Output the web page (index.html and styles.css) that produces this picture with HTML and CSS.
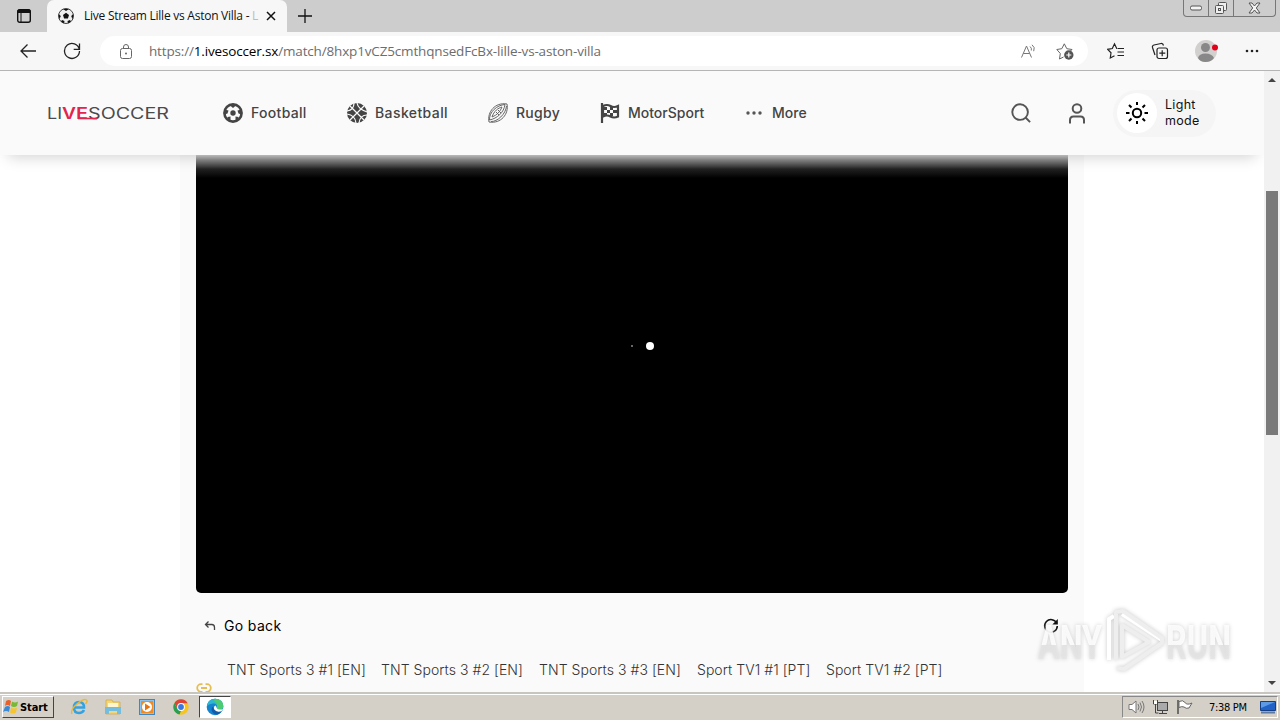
FILE: index.html
```html
<!DOCTYPE html>
<html lang="en">
<head>
    <meta charset="utf-8">
    <title>Live Stream Lille vs Aston Villa</title>
    <link rel="stylesheet" href="styles.css">
</head>
<body>
    <!-- tab strip -->
    <div class="tabs">
        <svg class="tab-menu" width="16" height="16" viewBox="0 0 16 16"><rect x="1.700" y="1.700" width="12.600" height="12.600" rx="2" fill="none" stroke="#111" stroke-width="1.400"/><path d="M2 2h12v2.500H2z" fill="#111" stroke="#111"/><path d="M5 5v9" stroke="#111"/></svg>
        <div class="tab">
            <svg width="16" height="16" viewBox="0 0 16 16"><circle cx="8" cy="8" r="7.500" fill="#eee" stroke="#444"/><path d="M8 4.800l3 2.200-1.100 3.500H6.100L5 7zM5 .9h6L8 2.900zM.6 6l2.200 2L1.400 11.500zM15.400 6l-2.200 2 1.400 3.500zM4 12l2.500 1L6 15.300 3 13.500zM12 12l-2.500 1 .5 2.300 3-1.800z" fill="#111"/></svg>
            <span class="tab-title">Live Stream Lille vs Aston Villa - <i>L</i></span>
            <svg class="tab-close" width="10" height="10" viewBox="0 0 10 10"><path d="M1 1l8 8M9 1L1 9" stroke="#111" stroke-width="1.500"/></svg>
        </div>
        <svg class="tab-new" width="16" height="16" viewBox="0 0 16 16"><path d="M8 1v14M1 8h14" stroke="#111" stroke-width="1.300"/></svg>
        <div class="window-buttons">
            <span><svg width="12" height="6" viewBox="0 0 12 6"><rect x=".5" y="1" width="11" height="4" rx="1.500" fill="#f4f4f4" stroke="#555"/></svg></span>
            <span><svg width="14" height="14" viewBox="0 0 14 14" fill="#eee" stroke="#555"><rect x="4.500" y="1.500" width="8" height="8" rx="1"/><rect x="1.500" y="4.500" width="8" height="8" rx="1"/><rect x="4.500" y="7.500" width="2" height="2"/></svg></span>
            <span class="wide"><svg width="13" height="12" viewBox="0 0 13 12"><path d="M1 1h3l2.500 3L9 1h3L8.300 6l3.700 5H9L6.500 8 4 11H1l3.700-5z" fill="#f4f4f4" stroke="#555"/></svg></span>
        </div>
    </div>

    <!-- address bar -->
    <div class="toolbar">
        <svg class="nav-back" width="18" height="16" viewBox="0 0 18 16"><path d="M17 8H2M8.500 1.500L2 8l6.500 6.500" fill="none" stroke="#222" stroke-width="1.300"/></svg>
        <svg class="nav-reload" width="18" height="18" viewBox="0 0 18 18"><path d="M16.300 7.200A7.500 7.500 0 1 0 16.500 9M16.500 1.500v5.800h-5.800" fill="none" stroke="#222" stroke-width="1.300"/></svg>
        <div class="address">
            <svg width="14" height="17" viewBox="0 0 14 17"><rect x="1.500" y="5.500" width="11" height="10" rx="2" fill="none" stroke="#666"/><path d="M4.500 5.500V4a2.500 2.500 0 0 1 5 0v1.500" fill="none" stroke="#666"/><circle cx="7" cy="10.500" r="1" fill="#666"/></svg>
            <span class="url">https://<b>1.ivesoccer.sx</b>/match/8hxp1vCZ5cmthqnsedFcBx-lille-vs-aston-villa</span>
            <svg class="read" width="18" height="16" viewBox="0 0 18 16" fill="none" stroke="#777"><path d="M1.500 14.500L6.500 3l5 11.500M3.300 10.500h6.400M10 3.500q2 1.500 1.300 4M12 1.800q3.500 2.500 1.700 6.400"/></svg>
            <svg width="18" height="18" viewBox="0 0 18 18"><path d="M7.500 15l-4 2 .8-5.500L.8 7.500l5-.8 2.500-4.900 2.500 4.900 5.200.8-2 2" fill="none" stroke="#666"/><circle cx="12.800" cy="13" r="4.700" fill="#555"/><path d="M12.800 10.500v5M10.300 13h5" stroke="#fff" stroke-width="1.200"/></svg>
        </div>
        <svg class="tool-fav" width="18" height="18" viewBox="0 0 18 18" fill="none" stroke="#222" stroke-width="1.200"><path d="M10 6.500H9.700L7.500 1.800 5.300 6.500l-4.600.8 3.300 3.500L3.300 16l4.200-2.200M10.500 6.500H17M10.500 10H17M10.500 13.500H17"/></svg>
        <svg class="tool-col" width="18" height="18" viewBox="0 0 18 18" fill="none" stroke="#222" stroke-width="1.200"><rect x="6" y="6" width="10.500" height="10.500" rx="2"/><path d="M11.200 8.300v6M8.300 11.200h6M4 13L1.500 5.500Q1 3.500 3 3l7-1.500q2-.3 2.500 2"/></svg>
        <svg class="tool-user" width="24" height="24" viewBox="0 0 24 24"><circle cx="12" cy="12" r="11" fill="#d2d0ce"/><circle cx="11.500" cy="8.500" r="4.500" fill="#888"/><path d="M4 19q1-4.500 7.500-4.500T20 19q-3 4-8.500 4T4 19z" fill="#888"/><circle cx="21" cy="8.500" r="3" fill="#e3001b"/></svg>
        <svg class="tool-more" width="14" height="4" viewBox="0 0 14 4" fill="#222"><circle cx="2" cy="2" r="1.300"/><circle cx="7" cy="2" r="1.300"/><circle cx="12" cy="2" r="1.300"/></svg>
    </div>

    <div class="viewport">
        <div class="page">
            <header class="header">
                <svg class="logo" width="124" height="24" viewBox="0 0 124 24"><g fill="#4b4b4d"><text x="-1" y="18" textLength="15" lengthAdjust="spacingAndGlyphs">LI</text><text x="40" y="18" textLength="81" lengthAdjust="spacingAndGlyphs">SOCCER</text></g><g class="logo-red"><text x="14" y="18" textLength="14" lengthAdjust="spacingAndGlyphs">V</text><text x="28" y="18" textLength="12" lengthAdjust="spacingAndGlyphs">E</text></g><path d="M30 17.500h19" stroke="#e3244b" stroke-width="1.600"/></svg>
                <nav class="menu">
                    <a class="football"><svg width="20" height="20" viewBox="0 0 20 20"><circle cx="10" cy="10" r="8.600" fill="none" stroke="#444" stroke-width="2.600"/><circle cx="10" cy="10" r="2.700" fill="#444"/><path d="M6.500 2h7L10 5zM1.500 6.500l4 1L4.500 10.500l-3 1zM18.500 6.500l-4 1 1 3 3 1zM4.500 14l3-.5v4l-3-1zM15.500 14l-3-.5v4l3-1z" fill="#444"/></svg><span>Football</span></a>
                    <a class="basketball"><svg width="20" height="20" viewBox="0 0 20 20"><circle cx="10" cy="10" r="10" fill="#444"/><path d="M3 3l14 14M17 3L3 17M7 0q0 7-7 8M20 12q-7 0-8 8M10 0q1 6 10 9M0 11q8 1 9 9" fill="none" stroke="#fafafa" stroke-width="1.200"/></svg><span>Basketball</span></a>
                    <a class="rugby"><svg width="20" height="20" viewBox="0 0 20 20" fill="none" stroke="#666" stroke-width="1"><path d="M1 19C-1 9 7-1 19 1c2 10-6 20-18 18z"/><path d="M1.500 17C1 9 9 2 17 1.500c-1 8-8 14-15.500 15.500zM3 18.500C9 19 18 11 18.500 3M4 14C6 8 10 5 14 4c-2 5-5 8-10 10zM8 9l3 3M10 7l3 3"/></svg><span>Rugby</span></a>
                    <a class="motor"><svg width="20" height="20" viewBox="0 0 20 20"><path d="M2 0v20M3 3q4-2 7.500 0t7.500 0v10.500q-4 2-7.500 0T3 13.500z" fill="none" stroke="#444" stroke-width="2.200"/><path d="M4 4h3v3H4zM10 4h3v3h-3zM7 7h3v3H7zM13 7h4v3h-4zM4 10h3v3H4zM10 10h3v3h-3z" fill="#444"/></svg><span>MotorSport</span></a>
                    <a class="more"><svg width="16" height="4" viewBox="0 0 16 4" fill="#555"><circle cx="2" cy="2" r="1.700"/><circle cx="8" cy="2" r="1.700"/><circle cx="14" cy="2" r="1.700"/></svg><span>More</span></a>
                </nav>
                <div class="actions">
                    <svg width="20" height="20" viewBox="0 0 22 22" fill="none" stroke="#555" stroke-width="2.100"><circle cx="10" cy="10" r="8.600"/><path d="M16 16l5 5"/></svg>
                    <svg width="16" height="21" viewBox="0 0 16 21" fill="none" stroke="#555" stroke-width="2"><circle cx="8" cy="5.500" r="4.300"/><path d="M1 20.500V17q0-3.500 3.500-3.500h7q3.500 0 3.500 3.500v3.500"/></svg>
                    <div class="mode">
                        <div class="mode-knob"><svg width="24" height="24" viewBox="0 0 24 24" fill="none" stroke="#000" stroke-width="2"><circle cx="12" cy="12" r="4.200"/><path d="M12 1v3M12 20v3M1 12h3.500M19.500 12H23M4 4l2.500 2.500M17.500 17.500L20 20M20 4l-2.500 2.500M6.500 17.500L4 20"/></svg></div>
                        <span>Light<br>mode</span>
                    </div>
                </div>
            </header>

            <main class="panel">
                <div class="video"><i class="dot small"></i><i class="dot"></i></div>
                <div class="controls">
                    <svg width="12" height="12" viewBox="0 0 12 12" fill="none" stroke="#444" stroke-width="1.300"><path d="M4.500 1.500l-3 3 3 3M1.500 4.500h6.300q2.700 0 2.700 3V10"/></svg>
                    <span class="go-back">Go back</span>
                    <svg class="refresh" width="16" height="16" viewBox="0 0 16 16"><path d="M13.700 5.200A6.300 6.300 0 1 0 14.300 8" fill="none" stroke="#111" stroke-width="1.600"/><path d="M14.800 1v5.500H9.300z" fill="#111"/></svg>
                </div>
                <div class="streams">
                    <a class="tnt1">TNT Sports 3 #1 [EN]</a>
                    <a class="tnt2">TNT Sports 3 #2 [EN]</a>
                    <a class="tnt3">TNT Sports 3 #3 [EN]</a>
                    <a class="tv1">Sport TV1 #1 [PT]</a>
                    <a class="tv2">Sport TV1 #2 [PT]</a>
                </div>
                <svg class="link" width="16" height="10" viewBox="0 0 16 10" fill="none" stroke="#e5bd55" stroke-width="1.800"><path d="M6.500 1.200H5a3.800 3.800 0 0 0 0 7.600h1.500M9.500 1.200H11a3.800 3.800 0 0 1 0 7.600H9.500M5 5h6"/></svg>
            </main>
        </div>
        <div class="scrollbar"><i class="up"></i><div class="thumb"></div><i class="down"></i></div>
    </div>

    <!-- watermark over the page -->
    <svg class="watermark" width="204" height="70" viewBox="0 0 204 70">
        <defs><linearGradient id="fade" x2="0" y2="1"><stop offset=".54" stop-color="#fff" stop-opacity=".85"/><stop offset=".54" stop-color="#e4e4e4" stop-opacity=".8"/></linearGradient></defs>
        <g fill="url(#fade)"><text x="4" y="53" textLength="64" lengthAdjust="spacingAndGlyphs">ANY</text><text x="132" y="53" textLength="65" lengthAdjust="spacingAndGlyphs">RUN</text></g>
        <g fill="none" stroke="#fff" stroke-width="4" stroke-linejoin="round"><path d="M75 54V13l5-3M128 34L88 8"/><path d="M82 54V6l7-1 39 27v5L90 63l-7-1M88 51V19l27 17z" stroke="#eee"/></g>
    </svg>

    <div class="taskbar">
        <div class="start"><svg width="17" height="16" viewBox="0 0 17 16"><path d="M3 2q3-2 5 0L7 7Q4 5 2 7z" fill="#e8622a"/><path d="M9 2.500q3 2 6 0L14 7q-3 2-6 0z" fill="#78b833"/><path d="M2 8q3-2 5 0l-1 5Q3 11 0 13z" fill="#3b8ad8"/><path d="M8 8.500q3 2 6 0l-1 5q-3 2-6 0z" fill="#f6c52d"/></svg><span>Start</span></div>
        <svg class="launch-ie" width="18" height="18" viewBox="0 0 18 18" fill="none"><path d="M4 9.500h10Q14 4 9 4T4 9.500 9 15q3.500 0 5-3" stroke="#35a2df" stroke-width="2.600"/><path d="M2 16Q0 12 7 6t9.500-4Q18 3 15.500 6" stroke="#e7b83c" stroke-width="1.400"/></svg>
        <svg class="launch-files" width="18" height="16" viewBox="0 0 18 16"><path d="M2 1h6l1 2h7v12H2z" fill="#f4d674" stroke="#c9a84a" stroke-width=".7"/><path d="M4 4h10v4H4z" fill="#fff6d0"/><path d="M1 8h16v7h-4v-3H5v3H1z" fill="#73bde0"/></svg>
        <svg class="launch-media" width="16" height="16" viewBox="0 0 16 16"><rect x=".5" y=".5" width="15" height="15" fill="#8cc3ec" stroke="#4386bd"/><path d="M2 2h12v12H2z" fill="#f28a1f"/><circle cx="8" cy="8" r="5" fill="#fff"/><path d="M6 4.500L11.500 8 6 11.500z" fill="#e8740c"/></svg>
        <svg class="launch-chrome" width="16" height="16" viewBox="0 0 16 16"><circle cx="8" cy="8" r="7.700" fill="#f8c51c"/><path d="M1.300 4.200a7.700 7.700 0 0 1 13.400 0H8L4.700 10z" fill="#dc4437"/><path d="M1.300 4.200L4.700 10 8 11.800 6.500 15.600A7.700 7.700 0 0 1 1.300 4.200z" fill="#2b9d54"/><circle cx="8" cy="8" r="3.900" fill="#fff"/><circle cx="8" cy="8" r="2.900" fill="#3b79e1"/></svg>
        <div class="task-active"><svg width="18" height="18" viewBox="0 0 18 18"><circle cx="9" cy="9" r="8.300" fill="#1683cf"/><path d="M1 8Q2 .7 9 .7 17 1 17.300 8q0 4-4.800 4-3 0-1.800-2Q12 6 8 5.500 4 5 1 8z" fill="#2fb5d0"/><path d="M9 .7Q17 1 17.300 8q0 4-4.800 4-3 0-1.800-2Q12 5 8 3z" fill="#4ccb72"/><path d="M6 9q-2 6 5 7.800 3-1 4.500-3.300Q8 15 8 9.500z" fill="#125ba9"/><path d="M9.800 7.500q-3 1-1.500 4 2 3 7 1.800l2-2.300q-6 1.500-6.600-1z" fill="#fff"/></svg></div>
        <div class="tray">
            <svg class="t-sound" width="17" height="16" viewBox="0 0 17 16"><path d="M1 5.500h3L8 2v12l-4-3.500H1z" fill="#fff" stroke="#777"/><path d="M10 5q2 3 0 6M12 3.500q3 4.500 0 9M14 2q4 6 0 12" fill="none" stroke="#777"/></svg>
            <svg class="t-net" width="17" height="16" viewBox="0 0 17 16"><rect x="5.500" y="3.500" width="10" height="8" fill="#aaa" stroke="#444"/><path d="M7 14.500h8M10.500 12v2M1.500 1v4h4V1M3.500 5v9h3" fill="none" stroke="#444"/><path d="M2 2h3v3H2z" fill="#fff"/></svg>
            <svg class="t-flag" width="17" height="16" viewBox="0 0 17 16"><path d="M2 1v14" stroke="#555" stroke-width="1.600"/><path d="M3 2.500q4-2 6 1t7 .5l-3 5q-3 1-5-1-2-1-5 .5z" fill="#fff" stroke="#666"/></svg>
            <span class="clock">7:38 PM</span>
            <svg class="t-screen" width="16" height="13" viewBox="0 0 16 13"><path d="M.5.500h15v9H.5z" fill="#2262c6" stroke="#163f83"/><path d="M1 1h14L1 7z" fill="#5c9ae6"/><path d="M1 11.500h14" stroke="#5b7ba5" stroke-width="2"/></svg>
        </div>
    </div>
</body>
</html>
```
FILE: styles.css
```css
* {
    box-sizing: border-box;
}

body {
    margin: 0;
    width: 1280px;
    height: 720px;
    overflow: hidden;
    display: flex;
    flex-direction: column;
    background: #fff;
    font-family: Inter, sans-serif;
}

svg {
    display: block;
    flex-shrink: 0;
}

span, a {
    white-space: nowrap;
}

/* browser */
.tabs {
    height: 32px;
    display: flex;
    background: #cdcdcd;
}

.tab-menu {
    margin: 8px 15px 0 16px;
}

.tab {
    width: 240px;
    height: 32px;
    padding: 0 11px;
    display: flex;
    align-items: center;
    border-radius: 7px 7px 0 0;
    background: #f7f7f7;
    font: 12px "Open Sans", sans-serif;
    color: #111;
}

.tab-title {
    width: 175px;
    margin: 0 0 1px 10px;
    letter-spacing: -0.25px;
}

.tab-title i {
    font-style: normal;
    color: #bbb;
}

.tab-close {
    margin-left: auto;
}

.tab-new {
    margin: 8px 0 0 10px;
}

.window-buttons {
    height: 17px;
    margin: 0 4px 0 auto;
    display: flex;
    border: 1px solid #777;
    border-top: 0;
    border-radius: 0 0 4px 4px;
}

.window-buttons span {
    width: 25px;
    display: flex;
    align-items: center;
    justify-content: center;
    border-right: 1px solid #777;
}

.window-buttons .wide {
    width: 41px;
    border: 0;
}

.toolbar {
    height: 39px;
    display: flex;
    align-items: center;
    background: #f7f7f7;
    border-bottom: 1px solid #b5b5b5;
}

.nav-back {
    margin-left: 19px;
}

.nav-reload {
    margin-left: 26px;
}

.address {
    width: 988px;
    height: 30px;
    margin-left: 19px;
    padding: 0 14px 0 19px;
    display: flex;
    align-items: center;
    border-radius: 15px;
    background: #fff;
}

.url {
    margin-left: 16px;
    font: 13.5px "Open Sans", sans-serif;
    letter-spacing: -0.16px;
    color: #6d6d6d;
}

.url b {
    font-weight: normal;
    color: #000;
}

.read {
    margin: 0 18px 0 auto;
}

.tool-fav {
    margin-left: 19px;
}

.tool-col {
    margin-left: 26px;
}

.tool-user {
    margin-left: 25px;
}

.tool-more {
    margin-left: 27px;
}

.viewport {
    height: 621px;
    display: flex;
}

.page {
    width: 1264px;
    overflow: hidden;
}

.scrollbar {
    width: 16px;
    display: flex;
    flex-direction: column;
    align-items: center;
    background: #f1f1f1;
}

.thumb {
    width: 12px;
    height: 244px;
    margin-top: 109px;
    background: #7a7a7a;
}

.up, .down {
    border: 4px solid transparent;
}

.up {
    margin-top: 3px;
    border-bottom-color: #444;
}

.down {
    margin: auto 0 3px;
    border-top-color: #444;
}

/* site header */
.header {
    position: relative;
    height: 84px;
    padding-left: 48px;
    display: flex;
    align-items: center;
    background: #fafafa;
    box-shadow: 0 10px 14px -8px rgba(0, 0, 0, 0.18);
}

.logo {
    font: 15.5px Inter, sans-serif;
}

.logo-red {
    fill: #e3244b;
    font-weight: 600;
}

.menu {
    display: flex;
    margin-left: 51px;
    color: #444;
    font-size: 14px;
    font-weight: 500;
}

.menu a {
    display: flex;
    align-items: center;
    gap: 8px;
}

.menu span {
    margin-bottom: 1px;
}

.football {
    width: 124px;
}

.football span {
    letter-spacing: 0.3px;
}

.basketball {
    width: 141px;
}

.basketball span {
    letter-spacing: 0.4px;
}

.rugby {
    width: 112px;
}

.rugby span {
    letter-spacing: 0.3px;
}

.motor {
    width: 146px;
}

.more span {
    margin-left: 2px;
}

.actions {
    margin: 0 48px 0 auto;
    display: flex;
    align-items: center;
    gap: 38px;
}

.mode {
    width: 103px;
    height: 47px;
    margin-left: -10px;
    padding-left: 4px;
    display: flex;
    align-items: center;
    border-radius: 24px;
    background: #f5f5f5;
    font-size: 12.5px;
    line-height: 16px;
    letter-spacing: 0.3px;
    color: #111;
}

.mode-knob {
    width: 40px;
    height: 40px;
    margin-right: 8px;
    display: flex;
    align-items: center;
    justify-content: center;
    border-radius: 50%;
    background: #fff;
}

/* player */
.panel {
    width: 904px;
    height: 537px;
    margin-left: 180px;
    padding: 0 16px;
    background: #fafafa;
}

.video {
    height: 438px;
    padding: 0 0 56px 2px;
    display: flex;
    align-items: center;
    justify-content: center;
    gap: 13px;
    border-radius: 0 0 5px 5px;
    background: linear-gradient(#d0d0d0, #888 5px, #222 14px, #000 23px);
}

.dot {
    width: 8px;
    height: 8px;
    border-radius: 50%;
    background: #fff;
}

.dot.small {
    width: 2px;
    height: 2px;
    margin-left: 18px;
    background: #888;
}

.controls {
    height: 34px;
    margin-top: 16px;
    padding: 0 9px 0 8px;
    display: flex;
    align-items: center;
    font-size: 14px;
    color: #000;
}

.go-back {
    margin: 0 0 1px 8px;
    letter-spacing: 0.35px;
}

.refresh {
    margin-left: auto;
}

.streams {
    height: 40px;
    margin-top: 6px;
    padding-left: 31px;
    display: flex;
    align-items: center;
    font-size: 14px;
    font-weight: 300;
    letter-spacing: 0.05px;
    color: #333;
}

.tnt1 {
    width: 154px;
}

.tnt2, .tnt3 {
    width: 158px;
}

.tv1 {
    width: 129px;
}

.link {
    margin-top: -6px;
}

.watermark {
    position: absolute;
    left: 1034px;
    top: 606px;
    font: bold 48px Roboto, sans-serif;
    filter: drop-shadow(0 0 2px #c8c8c8);
}

/* taskbar */
.taskbar {
    position: relative;
    height: 28px;
    padding: 0 2px;
    display: flex;
    align-items: center;
    background: #d4d0c8;
    border-top: 2px solid #c8c5bf;
    box-shadow: inset 0 1px #fff;
    font: 11px "DejaVu Sans Condensed", "DejaVu Sans", sans-serif;
}

.start {
    width: 52px;
    height: 22px;
    display: flex;
    align-items: center;
    border: 1px solid #fff;
    border-right-color: #444;
    border-bottom-color: #444;
    font-weight: bold;
}

.start span {
    margin-left: 0;
    letter-spacing: -0.1px;
}

.launch-ie {
    margin-left: 16px;
}

.launch-files {
    margin-left: 16px;
}

.launch-media {
    margin-left: 17px;
}

.launch-chrome {
    margin-left: 18px;
}

.task-active {
    width: 32px;
    height: 22px;
    margin-left: 10px;
    display: flex;
    align-items: center;
    justify-content: center;
    border: 1px solid #444;
    border-right-color: #fff;
    border-bottom-color: #fff;
    background: #fff;
}

.tray {
    width: 156px;
    height: 22px;
    margin-left: auto;
    padding: 0 0 0 5px;
    display: flex;
    align-items: center;
    border: 1px solid #888;
    border-right-color: #fff;
    border-bottom-color: #fff;
}

.t-net, .t-flag {
    margin-left: 7px;
}

.clock {
    width: 40px;
    margin-left: 16px;
    letter-spacing: -0.3px;
}

.t-screen {
    margin-left: 11px;
}
```
